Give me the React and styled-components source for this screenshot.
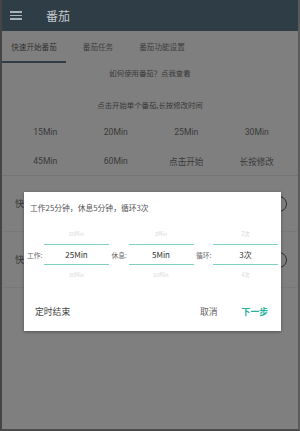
import React from 'react';
import styled, { createGlobalStyle } from 'styled-components';

const GlobalStyle = createGlobalStyle`
  html, body {
    margin: 0;
    padding: 0;
    background: #7f7f7f;
  }
  body {
    font-family: Roboto, "Noto Sans CJK SC", "Noto Sans", sans-serif;
  }
  * {
    box-sizing: border-box;
  }
`;

const quickTimes = ['15Min', '20Min', '25Min', '30Min', '45Min', '60Min', '点击开始', '长按修改'];

const pickers = [
  { label: '工作:', prev: '20Min', value: '25Min', next: '30Min' },
  { label: '休息:', prev: '3Min', value: '5Min', next: '10Min' },
  { label: '循环:', prev: '2次', value: '3次', next: '4次' },
];

const App = () => {
  return (
    <>
      <GlobalStyle />
      <StFrame>
        <StAppBar>
          <StMenuIcon>
            <span />
            <span />
            <span />
          </StMenuIcon>
          <StTitle>番茄</StTitle>
        </StAppBar>

        <StTabs>
          <StTab active>快速开始番茄</StTab>
          <StTab>番茄任务</StTab>
          <StTab>番茄功能设置</StTab>
        </StTabs>

        <StContent>
          <StHint>如何使用番茄？点我查看</StHint>
          <StHint spaced>点击开始单个番茄,长按修改时间</StHint>
          <StTimeGrid>
            {quickTimes.map((t) => (
              <StTimeCell key={t}>{t}</StTimeCell>
            ))}
          </StTimeGrid>
          <StOptionRow>
            <span>快</span>
            <StRadio />
          </StOptionRow>
          <StOptionRow>
            <span>快</span>
            <StRadio />
          </StOptionRow>
        </StContent>

        <StDialog>
          <StDialogTitle>工作25分钟，休息5分钟，循环3次</StDialogTitle>
          <StPickerRow>
            {pickers.map((p) => (
              <StPickerGroup key={p.label}>
                <StPickerLabel>{p.label}</StPickerLabel>
                <StWheel>
                  <StWheelItem>{p.prev}</StWheelItem>
                  <StWheelSelected>{p.value}</StWheelSelected>
                  <StWheelItem>{p.next}</StWheelItem>
                </StWheel>
              </StPickerGroup>
            ))}
          </StPickerRow>
          <StActions>
            <StActionButton>定时结束</StActionButton>
            <StActionGroup>
              <StActionButton muted>取消</StActionButton>
              <StActionButton primary>下一步</StActionButton>
            </StActionGroup>
          </StActions>
        </StDialog>
      </StFrame>
    </>
  );
};

export default App;

const StFrame = styled.div`
  position: relative;
  width: 300px;
  height: 431px;
  background: #7f7f7f;
  border-left: 2px solid #454545;
  border-right: 2px solid #5a5a5a;
  border-bottom: 2px solid #4a4a4a;
  overflow: hidden;
`;

const StAppBar = styled.div`
  height: 31px;
  background: #2f3e46;
  display: flex;
  align-items: center;
  padding-left: 8px;
  gap: 24px;
`;

const StMenuIcon = styled.div`
  width: 12px;
  display: flex;
  flex-direction: column;
  gap: 2px;

  span {
    display: block;
    height: 1.5px;
    background: #aab3b8;
  }
`;

const StTitle = styled.div`
  font-family: "Noto Sans CJK SC", sans-serif;
  font-size: 12px;
  color: #c3c9cc;
  line-height: 1;
`;

const StTabs = styled.div`
  height: 32px;
  display: flex;
`;

const StTab = styled.div`
  width: 64px;
  display: flex;
  align-items: center;
  justify-content: center;
  font-family: "Noto Sans CJK SC", sans-serif;
  font-size: 7.6px;
  color: ${(p) => (p.active ? '#333' : '#3e3e3e')};
  border-bottom: 2px solid ${(p) => (p.active ? '#2f3e46' : 'transparent')};
  padding-top: 1px;
`;

const StContent = styled.div`
  padding-top: 4px;
`;

const StHint = styled.div`
  font-family: "Noto Sans CJK SC", sans-serif;
  font-size: 7.4px;
  line-height: 12px;
  text-align: center;
  color: #383838;
  margin-top: ${(p) => (p.spaced ? '20px' : '0')};
`;

const StTimeGrid = styled.div`
  display: grid;
  grid-template-columns: repeat(4, 1fr);
  grid-auto-rows: 29px;
  padding: 0 6px 0 8px;
  margin-top: 6px;
  border-bottom: 1px solid #747474;
`;

const StTimeCell = styled.div`
  display: flex;
  align-items: center;
  justify-content: center;
  font-size: 8.6px;
  color: #3a3a3a;
`;

const StOptionRow = styled.div`
  height: 56px;
  display: flex;
  align-items: center;
  justify-content: space-between;
  padding: 0 11px 0 13px;
  border-bottom: 1px solid #787878;
  font-family: "Noto Sans CJK SC", sans-serif;
  font-size: 9px;
  color: #353535;
`;

const StRadio = styled.div`
  width: 16px;
  height: 16px;
  border-radius: 50%;
  border: 1.5px solid #2e2e2e;
`;

const StDialog = styled.div`
  position: absolute;
  left: 22px;
  top: 192px;
  width: 257px;
  height: 139px;
  background: #fff;
  box-shadow: 0 1px 3px rgba(0, 0, 0, 0.35);
  padding: 10px 3px 10px 3px;
  display: flex;
  flex-direction: column;
  font-family: "Noto Sans CJK SC", sans-serif;
`;

const StDialogTitle = styled.div`
  font-size: 7.8px;
  line-height: 12px;
  color: #555;
  padding-left: 3px;
  white-space: nowrap;
`;

const StPickerRow = styled.div`
  display: flex;
  justify-content: space-between;
  margin-top: 10px;
`;

const StPickerGroup = styled.div`
  display: flex;
  align-items: center;
`;

const StPickerLabel = styled.div`
  width: 17px;
  font-size: 6.8px;
  color: #666;
  white-space: nowrap;
  margin-top: 1px;
`;

const StWheel = styled.div`
  width: 65px;
  display: flex;
  flex-direction: column;
`;

const StWheelItem = styled.div`
  height: 20px;
  display: flex;
  align-items: center;
  justify-content: center;
  font-size: 5.5px;
  color: #d8d8d8;
`;

const StWheelSelected = styled.div`
  height: 21px;
  display: flex;
  align-items: center;
  justify-content: center;
  font-size: 8px;
  color: #333;
  border-top: 1px solid #7fcfc3;
  border-bottom: 1px solid #7fcfc3;
`;

const StActions = styled.div`
  display: flex;
  align-items: center;
  justify-content: space-between;
  margin-top: auto;
  height: 20px;
  padding: 0 10px 0 8px;
`;

const StActionGroup = styled.div`
  display: flex;
  align-items: center;
  gap: 24px;
`;

const StActionButton = styled.div`
  font-size: 8.8px;
  color: ${(p) => (p.primary ? '#28b09c' : p.muted ? '#666' : '#444')};
  font-weight: ${(p) => (p.primary ? 700 : 400)};
`;
